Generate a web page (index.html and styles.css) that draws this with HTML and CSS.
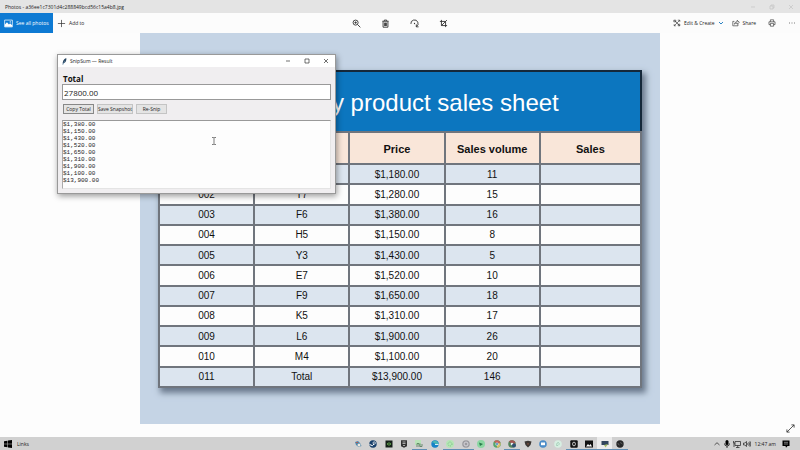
FILE: index.html
```html
<!DOCTYPE html>
<html lang="en">
<head>
<meta charset="utf-8">
<title>Photos</title>
<link rel="stylesheet" href="styles.css">
</head>
<body>
<header class="titlebar">
  <span class="titlebar-name">Photos - a36ee1c7301d4c288849bcd56c15a4b8.jpg</span>
  <span class="captions faint">
    <svg viewBox="0 0 8 8"><path d="M2 4h4"/></svg>
    <svg viewBox="0 0 8 8"><path d="M2 3h3v3H2zM3 3V2h3v3H5"/></svg>
    <svg viewBox="0 0 8 8"><path d="M2 2l4 4M6 2L2 6"/></svg>
  </span>
</header>
<nav class="toolbar">
  <div class="tools">
    <button class="see-all"><svg class="icon" viewBox="0 0 10 10"><path d="M.7 1.2h8.6v7.6H.7z" fill="none" stroke="#fff" stroke-width=".8"/><path d="M1 8V6l2.3-2.4L5.500 6l1.300-1.200L9 7v1.500H1z" fill="#fff"/><circle cx="7" cy="3.200" r=".8" fill="#fff"/></svg>See all photos</button>
    <button class="tool"><svg class="icon line" viewBox="0 0 10 10"><path d="M5 1v8M1 5h8"/></svg>Add to</button>
  </div>
  <div class="tools center">
    <button class="tool" aria-label="Zoom"><svg class="icon line" viewBox="0 0 10 10"><circle cx="4" cy="4" r="2.800"/><path d="M6.100 6.100L9.300 9.300M2.700 4h2.600M4 2.700v2.600"/></svg></button>
    <button class="tool" aria-label="Delete"><svg class="icon line" viewBox="0 0 10 10"><path d="M1.500 2.500h7M3.700 2.300V1.200h2.600v1.100M2.300 2.700v6.400h5.400V2.700M4 4v3.800M5 4v3.800M6 4v3.800"/></svg></button>
    <button class="tool" aria-label="Rotate"><svg class="icon line" viewBox="0 0 10 10"><path d="M1 5.500A4 4 0 1 1 7 8.500M7 6v2.700h2.500"/><circle cx="5" cy="5" r=".7" fill="#333" stroke="none"/></svg></button>
    <button class="tool" aria-label="Crop"><svg class="icon line" viewBox="0 0 10 10"><path d="M2.700 1v6.300H9M1 2.700h6.300V9M2.700 7.300L8.800 1.200"/></svg></button>
  </div>
  <div class="tools end">
    <button class="tool"><svg class="icon line" viewBox="0 0 10 10"><path d="M2 2l6.500 6.500M1.500 8.500l7-7M1 1.500h2.500v2H1zM6 1.500h2.500v2M1.500 6.500v2h2M6.500 6.500h2v2h-2z"/></svg>Edit &amp; Create<svg class="chevron" viewBox="0 0 6 6"><path d="M1 2l2 2 2-2"/></svg></button>
    <button class="tool"><svg class="icon line" viewBox="0 0 10 10"><path d="M3 3H1v5.500h6.500V6.500M3 6.500C3.200 4.500 4.700 3.500 6.500 3.500V1.500L9.200 4.200 6.500 6.500V5C5 5 4 5.500 3 6.500z"/></svg>Share</button>
    <button class="tool print" aria-label="Print"><svg class="icon line" viewBox="0 0 10 10"><path d="M3 3.500V1h4v2.500M3 7H1.200V3.500h7.600V7H7M3 5.500h4V9H3z"/></svg></button>
    <button class="tool" aria-label="More"><svg class="icon" viewBox="0 0 10 10"><path d="M1.500 5h1M4.500 5h1M7.500 5h1" stroke="#333" fill="none"/></svg></button>
  </div>
</nav>
<main class="viewer">
  <div class="photo">
    <div class="sheet-frame">
      <table class="sheet">
        <caption>Company product sales sheet</caption>
        <thead>
          <tr><th>No.</th><th>Product</th><th>Price</th><th>Sales volume</th><th class="wide">Sales</th></tr>
        </thead>
        <tbody>
          <tr><td>001</td><td>A5</td><td>$1,180.00</td><td>11</td><td></td></tr>
          <tr><td>002</td><td>T7</td><td>$1,280.00</td><td>15</td><td></td></tr>
          <tr><td>003</td><td>F6</td><td>$1,380.00</td><td>16</td><td></td></tr>
          <tr><td>004</td><td>H5</td><td>$1,150.00</td><td>8</td><td></td></tr>
          <tr><td>005</td><td>Y3</td><td>$1,430.00</td><td>5</td><td></td></tr>
          <tr><td>006</td><td>E7</td><td>$1,520.00</td><td>10</td><td></td></tr>
          <tr><td>007</td><td>F9</td><td>$1,650.00</td><td>18</td><td></td></tr>
          <tr><td>008</td><td>K5</td><td>$1,310.00</td><td>17</td><td></td></tr>
          <tr><td>009</td><td>L6</td><td>$1,900.00</td><td>26</td><td></td></tr>
          <tr><td>010</td><td>M4</td><td>$1,100.00</td><td>20</td><td></td></tr>
          <tr><td>011</td><td>Total</td><td>$13,900.00</td><td>146</td><td></td></tr>
        </tbody>
      </table>
    </div>
  </div>
  <button class="expand" aria-label="Full screen"><svg viewBox="0 0 10 10"><path d="M1 9l8-8M6 1h3v3M1 6v3h3"/></svg></button>
</main>
<section class="window">
  <div class="window-bar">
    <svg class="feather" viewBox="0 0 8 8"><path d="M2 8C1.500 4 3 1 6 0c.5 3-.5 5-3 6z" fill="#24425e"/><path d="M2 8l2.500-5" stroke="#8fb4d2" stroke-width=".5"/></svg>
    <span>SnipSum — Result</span>
    <span class="captions">
      <svg viewBox="0 0 8 8"><path d="M2 4h4"/></svg>
      <svg viewBox="0 0 8 8"><path d="M2 2h4v4H2z"/></svg>
      <svg viewBox="0 0 8 8"><path d="M2 2l4 4M6 2L2 6"/></svg>
    </span>
  </div>
  <div class="window-body">
    <label class="total-label" for="total">Total</label>
    <input class="total" id="total" type="text" value="27800.00">
    <div class="actions">
      <button class="action focused">Copy Total</button>
      <button class="action">Save Snapshot</button>
      <button class="action">Re-Snip</button>
    </div>
    <textarea class="log" aria-label="Values">$1,380.00
$1,150.00
$1,430.00
$1,520.00
$1,650.00
$1,310.00
$1,900.00
$1,100.00
$13,900.00</textarea>
  </div>
  <svg class="cursor" viewBox="0 0 6 8"><path d="M1 .5h1.500l.5.500.500-.5H5M3 1v6M1 7.500h1.500L3 7l.500.500H5"/></svg>
</section>
<footer class="taskbar">
  <div class="start">
    <svg viewBox="0 0 8 8"><path d="M0 1.200L3.500.7v3H0zM4 .6L8 0v3.700H4zM0 4.200h3.500v3L0 6.800zM4 4.200h4V8L4 7.400z"/></svg>
    <span>Links</span>
  </div>
  <div class="apps">
    <span class="app"><svg viewBox="0 0 8 8"><path d="M1 2l3-1 2 2 1.500 3-3 1L2 5z" fill="#4f88ad"/><circle cx="5" cy="5" r="1.500" fill="#f0e7dc"/><path d="M2 2.500h2" stroke="#b65d54"/></svg></span>
    <span class="app"><svg viewBox="0 0 8 8"><circle cx="4" cy="4" r="3.700" fill="#18406b"/><circle cx="5.200" cy="3" r="1.200" fill="none" stroke="#fff" stroke-width=".7"/><path d="M.6 4.500l2.800 1.200L5 4" fill="none" stroke="#fff"/></svg></span>
    <span class="app"><svg viewBox="0 0 8 8"><path d="M.5.5h7v7h-7z" fill="#142019"/><path d="M2 4q2-2.500 4 0-2 2.500-4 0z" fill="none" stroke="#70bd58" stroke-width=".8"/></svg></span>
    <span class="app"><svg viewBox="0 0 8 8"><path d="M1 .3h6v6L4 7.800 1 6.300z" fill="#333"/><path d="M2.500 2h3M2.500 3.500h3M3 5.500h2" stroke="#ddd" stroke-width=".7"/></svg></span>
    <span class="app open"><svg viewBox="0 0 8 8"><path d="M0 0h6v5H0z" fill="#b9e3b8"/><path d="M2 7V3.500h2V7M5 3.500v3h2V4" fill="none" stroke="#537a59" stroke-width=".8"/></svg></span>
    <span class="app"><svg viewBox="0 0 8 8"><circle cx="4" cy="4" r="3.700" fill="#1683c8"/><path d="M1 2.500C3-1 7.500 1 7.500 4H4c0-1-1.500-1.500-3-1.500z" fill="#4bb8b5"/><path d="M4 5h3.500V4H4z" fill="#d5eef5"/></svg></span>
    <span class="app open"><svg viewBox="0 0 8 8"><circle cx="4" cy="4" r="4" fill="#b5e6b5"/><circle cx="4" cy="4" r="2" fill="none" stroke="#56a56a" stroke-width=".6" stroke-dasharray="1 1"/></svg></span>
    <span class="app open"><svg viewBox="0 0 8 8"><circle cx="4" cy="4" r="3.800" fill="#9b9ba0"/><circle cx="4" cy="4" r="2" fill="none" stroke="#d6d4da"/></svg></span>
    <span class="app"><svg viewBox="0 0 8 8"><circle cx="4" cy="4" r="4" fill="#8bd7a2"/><path d="M2 2.500l4 1.500-3 2z" fill="#287b4b"/></svg></span>
    <span class="app"><svg viewBox="0 0 8 8"><circle cx="4" cy="4" r="3.800" fill="#58a569"/><path d="M4 4L1 1.500A3.800 3.800 0 0 1 7.500 3z" fill="#c6645c"/><path d="M4 4l3.500-1A3.800 3.800 0 0 1 4 7.800z" fill="#d7bd68"/><circle cx="4" cy="4" r="1.600" fill="#e5edf5"/><circle cx="4" cy="4" r="1" fill="#4684be"/></svg></span>
    <span class="app open"><svg viewBox="0 0 8 8"><circle cx="4" cy="4" r="3.800" fill="#55845d"/><path d="M4 4L1 1.500A3.800 3.800 0 0 1 7.500 3z" fill="#a35551"/><circle cx="4" cy="4" r="1.300" fill="#e5edf5"/><circle cx="6" cy="5.500" r="2" fill="#304f72"/></svg></span>
    <span class="app"><svg viewBox="0 0 8 8"><path d="M.5 1.500L4 .7l3.500.8L6.500 5 4 7.500 1.500 5z" fill="#3b3532"/><path d="M3 3.500h2L4 5z" fill="#a15c43"/></svg></span>
    <span class="app"><svg viewBox="0 0 8 8"><circle cx="4" cy="4" r="3.800" fill="#4b8cc8"/><path d="M2 2.500h4v2.700H2z" fill="#fff"/></svg></span>
    <span class="app"><svg viewBox="0 0 8 8"><circle cx="4" cy="4" r="3.800" fill="#d7efe2"/><path d="M2.500 5.500L3 3l1.500-.5L5.500 4 4 5.500z" fill="none" stroke="#8bbfa4" stroke-width=".6"/></svg></span>
    <span class="app open"><svg viewBox="0 0 8 8"><rect x=".3" y=".3" width="7.400" height="7.400" rx="1" fill="#111"/><rect x="2.700" y="2.300" width="2.600" height="3.400" rx="1" fill="none" stroke="#eee" stroke-width=".9"/></svg></span>
    <span class="app open"><svg viewBox="0 0 8 8"><path d="M0 .5h8v7H0z" fill="#111"/><path d="M1 6.500l2-2.500 1.300 1.400L5.500 4 7 6.500z" fill="#fff"/></svg></span>
    <span class="app open active"><svg viewBox="0 0 8 8"><path d="M.5 1h7v4h-7z" fill="#32465e"/><path d="M3 5l4-1-2.500 3.500z" fill="#a5bd6a"/></svg></span>
    <span class="app open"><svg viewBox="0 0 8 8"><circle cx="4" cy="4" r="3.700" fill="#272727"/><path d="M4 2.300c1 1 2 .8 2.500 2M3.500 5C2.500 5 2 4 2 3" fill="none" stroke="#777" stroke-width=".7"/></svg></span>
  </div>
  <div class="tray">
    <svg class="line" viewBox="0 0 8 8"><path d="M1.500 5L4 2.700 6.500 5"/></svg>
    <svg viewBox="0 0 8 8"><rect x="2.500" y="0" width="3" height="5" rx="1.500"/><path d="M1.500 3.500q0 2.500 2.500 2.500t2.500-2.500M4 6v2" fill="none" stroke="#111" stroke-width=".8"/></svg>
    <svg class="line" viewBox="0 0 8 8"><path d="M2 1.500h5.500v4H2zM3 7.500h3.500M4.700 5.500v2M.5 1v2h1.500M1 3v4"/></svg>
    <svg class="line" viewBox="0 0 8 8"><path d="M.5 3v2h1.300l1.700 1.500v-5L1.800 3zM4.700 3q.7 1 0 2M5.800 2q1.500 2 0 4M6.900 1.200q2 2.800 0 5.600"/></svg>
    <time class="clock">12:47 am</time>
    <svg viewBox="0 0 8 8"><path d="M.5.500h7v5.500H5.500L4 7.700 3.500 6h-3z"/><path d="M2 2.300h4M2 4h4" stroke="#ccc" stroke-width=".6"/></svg>
  </div>
</footer>
</body>
</html>
```
FILE: styles.css
```css
* { box-sizing: border-box; }

body {
  margin: 0;
  min-height: 100vh;
  display: flex;
  flex-direction: column;
  background: #fdfdfd;
  color: #222;
  font: 5px/8px "Open Sans", "Noto Sans", sans-serif;
}

button, input, textarea { font: inherit; color: inherit; margin: 0; }
svg { display: block; flex: none; }

.titlebar {
  height: 13px;
  display: flex;
  align-items: center;
  justify-content: space-between;
  padding: 0 5px;
  background: #e4e4e4;
}

.captions { display: flex; gap: 11px; margin-left: auto; }
.captions svg { width: 8px; height: 8px; fill: none; stroke: #333; stroke-width: .7; }
.captions.faint svg { stroke: #c4c4c4; }

.toolbar {
  height: 20px;
  display: grid;
  grid-template-columns: 1fr auto 1fr;
  background: #fcfcfc;
}
.tools { display: flex; align-items: stretch; }
.tools button {
  display: flex;
  align-items: center;
  border: 0;
  background: none;
  padding: 0 4px;
  gap: 3px;
  white-space: nowrap;
}
.tools .see-all { background: #0e7ad3; color: #fff; width: 53px; }
.icon { width: 9px; height: 9px; }
.line { fill: none; stroke: #333; stroke-width: .8; }
.center button { width: 29px; justify-content: center; }
.center .icon { stroke-width: 1; }
.end { justify-content: flex-end; }
.end .icon { width: 8px; height: 8px; }
.end .print { padding: 0 8px; }
.chevron { width: 6px; height: 6px; fill: none; stroke: #2c83c4; }

.viewer {
  flex: 1;
  position: relative;
  display: flex;
  justify-content: center;
  align-items: flex-start;
}
.photo { width: 65%; padding: 37px 18px 36px; background: #c5d4e5; }
.sheet-frame { box-shadow: 3px 4px 6px 1px #6b7a8d; }

.sheet {
  width: 100%;
  height: 257px;
  table-layout: fixed;
  border-collapse: collapse;
  background: #fdfdfd;
  color: #111;
  font: 10px/14px "Liberation Sans", Arial, sans-serif;
  text-align: center;
}
.sheet caption {
  height: 61px;
  border: 2px solid #15283a;
  border-bottom-width: 0;
  background: #0c76bf;
  color: #fff;
  font-size: 24px;
  line-height: 61px;
}
.sheet th, .sheet td { border: 2px solid #70757d; padding: 1px 0 0; }
.sheet th { height: 32px; background: #f9e6d9; font-size: 11px; }
.sheet .wide { width: 21%; }
.sheet tbody tr:nth-child(odd) { background: #dce5ef; }

.expand {
  position: absolute;
  right: 5px;
  bottom: 4px;
  padding: 0;
  border: 0;
  background: none;
}
.expand svg { width: 9px; height: 9px; fill: none; stroke: #333; stroke-width: .9; }

.window {
  position: absolute;
  left: 57px;
  top: 54px;
  width: 279px;
  border: 1px solid #999;
  background: #f0eef0;
  box-shadow: 1px 2px 6px rgba(0, 0, 0, .4);
}
.window-bar {
  height: 12px;
  display: flex;
  align-items: center;
  gap: 2px;
  padding: 0 5px 0 3px;
  background: #fff;
}
.feather { width: 7px; height: 7px; }
.window-body { display: flex; flex-direction: column; padding: 6px 4px 4px; }
.total-label { font-size: 8px; font-weight: 700; line-height: 11px; color: #111; padding-left: 1px; }
.total {
  height: 16px;
  padding: 0 1px;
  border: 1px solid #999;
  border-radius: 0;
  background: #fff;
  font-size: 8px;
}
.actions { display: flex; gap: 3px; padding: 4px 1px 6px; }
.action {
  width: 31px;
  height: 10px;
  padding: 0;
  border: 1px solid #c4c4c4;
  background: #e4e4e4;
  white-space: nowrap;
}
.action:nth-child(2) { width: 36px; }
.action.focused { border-color: #888; }
.log {
  height: 69px;
  padding: 0;
  border: 1px solid #e4e4e4;
  border-top-color: #999;
  border-left-color: #aaa;
  border-radius: 0;
  background: #fdfdfd;
  font: 6px/7px "Liberation Mono", monospace;
  resize: none;
  overflow: hidden;
}
.cursor {
  position: absolute;
  left: 153px;
  top: 82px;
  width: 6px;
  height: 8px;
  fill: none;
  stroke: #444;
  stroke-width: .7;
}

.taskbar {
  height: 13px;
  display: grid;
  grid-template-columns: 350fr 278fr 172fr;
  background: #d1d1d1;
}
.taskbar svg { width: 8px; height: 8px; }
.start { display: flex; align-items: center; gap: 5px; padding-left: 4px; }
.apps { display: flex; }
.app { flex: 1; display: flex; justify-content: center; align-items: center; }
.app.open { box-shadow: inset 0 -1px #5f8eb5; }
.app.active { background: #ececec; }
.tray { display: flex; align-items: center; justify-content: flex-end; gap: 2px; padding-right: 10px; }
.clock { padding: 0 4px 0 2px; }
```
